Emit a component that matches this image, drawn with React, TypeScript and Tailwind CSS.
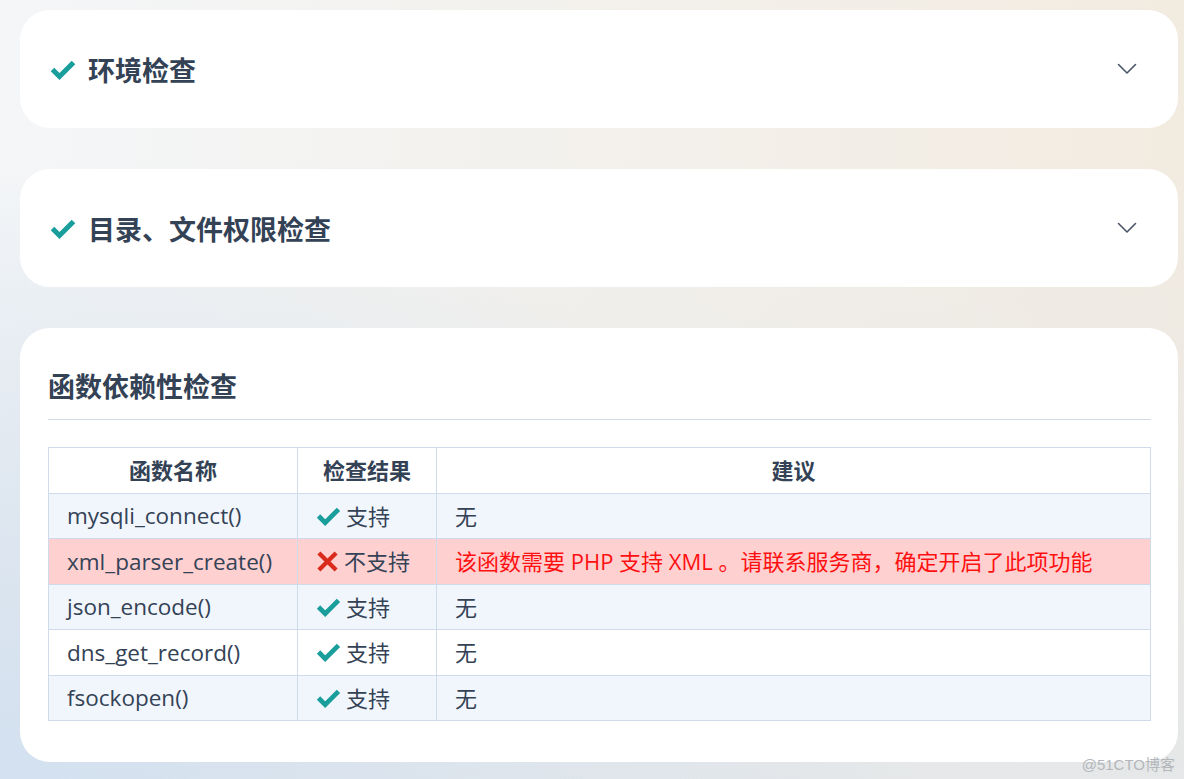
import React from "react";

const font = '"Open Sans", "Noto Sans CJK SC", sans-serif';

function Check({ className = "" }: { className?: string }) {
  return (
    <svg viewBox="0 0 26 20" className={className} fill="none">
      <polyline points="2.5,9.5 9.5,16.5 23.5,2.5" stroke="#1a9e9c" strokeWidth="5" strokeLinecap="butt" strokeLinejoin="miter" />
    </svg>
  );
}

function Cross({ className = "" }: { className?: string }) {
  return (
    <svg viewBox="0 0 24 22" className={className} fill="none">
      <path d="M3 2 L21 20 M21 2 L3 20" stroke="#d92a1c" strokeWidth="4.5" />
    </svg>
  );
}

function Chevron() {
  return (
    <svg viewBox="0 0 20 12" className="w-[20px] h-[12px]" fill="none">
      <polyline points="1.5,1.5 10,10 18.5,1.5" stroke="#4b5568" strokeWidth="1.6" strokeLinecap="round" strokeLinejoin="round" />
    </svg>
  );
}

function CollapsedCard({ title }: { title: string }) {
  return (
    <div className="h-[118px] bg-white rounded-[30px] flex items-center pl-[30px] pr-[41px]">
      <Check className="w-[26px] h-[20px] mt-[2px]" />
      <div className="ml-[12px] text-[27px] font-bold text-[#344256] leading-none mt-[2px]">{title}</div>
      <div className="ml-auto">
        <Chevron />
      </div>
    </div>
  );
}

const rows: { name: string; ok: boolean; advice: string; h: string }[] = [
  { name: "mysqli_connect()", ok: true, advice: "无", h: "h-[45px]" },
  { name: "xml_parser_create()", ok: false, advice: "该函数需要 PHP 支持 XML 。请联系服务商，确定开启了此项功能", h: "h-[46px]" },
  { name: "json_encode()", ok: true, advice: "无", h: "h-[45px]" },
  { name: "dns_get_record()", ok: true, advice: "无", h: "h-[46px]" },
  { name: "fsockopen()", ok: true, advice: "无", h: "h-[45px]" },
];

export default function App() {
  return (
    <div
      className="relative min-h-[779px] w-full overflow-hidden pl-[20px] pr-[6px] pt-[10px] bg-[radial-gradient(ellipse_at_0%_100%,rgba(210,224,240,0.95)_0%,rgba(210,224,240,0)_55%),linear-gradient(to_bottom,rgba(228,231,233,0)_20%,rgba(228,231,233,0.9)_100%),linear-gradient(to_right,#f4f6f8,#f2ebe0)]"
      style={{ fontFamily: font }}
    >
      <div className="flex flex-col gap-[41px]">
        <CollapsedCard title="环境检查" />
        <CollapsedCard title="目录、文件权限检查" />
        <div className="bg-white rounded-[30px] pl-[28px] pr-[27px] pt-[39px] pb-[41px]">
          <div className="text-[27px] font-bold text-[#344256] leading-[40px] pb-[12px] border-b border-[#d3dae4]">
            函数依赖性检查
          </div>
          <table className="mt-[27px] w-full border-collapse border border-[#cfdbea] text-[22px] text-[#344256]">
            <thead>
              <tr className="h-[46px] bg-white">
                <th className="w-[249px] border border-[#cfdbea] font-bold text-center">函数名称</th>
                <th className="w-[139px] border border-[#cfdbea] font-bold text-center">检查结果</th>
                <th className="border border-[#cfdbea] font-bold text-center">建议</th>
              </tr>
            </thead>
            <tbody>
              {rows.map((r, i) => {
                const bg = !r.ok ? "bg-[#ffd0d0]" : i % 2 === 0 ? "bg-[#f1f6fc]" : "bg-white";
                return (
                  <tr key={r.name} className={`${r.h} ${bg}`}>
                    <td className="border border-[#cfdbea] pl-[18px] text-[22.5px]">{r.name}</td>
                    <td className="border border-[#cfdbea] pl-[18px]">
                      <div className="flex items-center gap-[5px]">
                        {r.ok ? <Check className="w-[25px] h-[19px]" /> : <Cross className="w-[23px] h-[21px]" />}
                        <span>{r.ok ? "支持" : "不支持"}</span>
                      </div>
                    </td>
                    <td className={`border border-[#cfdbea] pl-[18px] ${r.ok ? "" : "text-[#ff1010]"}`}>{r.advice}</td>
                  </tr>
                );
              })}
            </tbody>
          </table>
        </div>
      </div>
      <div
        className="absolute right-[9px] bottom-[7px] text-[15px] text-[#b3b7bb] leading-none"
        style={{ fontFamily: '"Liberation Sans", "Noto Sans CJK SC", sans-serif' }}
      >
        @51CTO博客
      </div>
    </div>
  );
}
